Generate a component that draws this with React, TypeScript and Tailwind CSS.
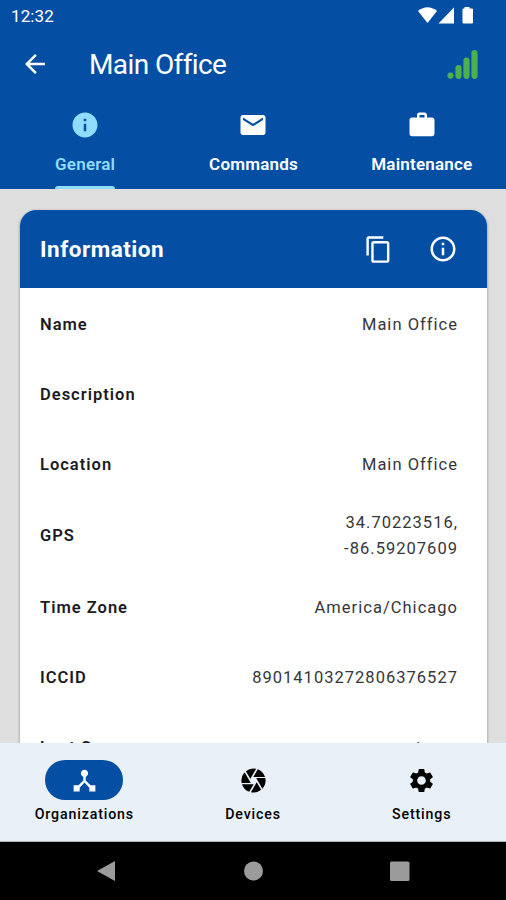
import type { IconType } from "react-icons";
import {
  MdArrowBack,
  MdCamera,
  MdContentCopy,
  MdDeviceHub,
  MdEmail,
  MdInfo,
  MdInfoOutline,
  MdSettings,
  MdWork,
} from "react-icons/md";

interface NavItem {
  label: string;
  icon: IconType;
  active?: boolean;
}

const tabs: NavItem[] = [
  { label: "General", icon: MdInfo, active: true },
  { label: "Commands", icon: MdEmail },
  { label: "Maintenance", icon: MdWork },
];

const bottomNav: NavItem[] = [
  { label: "Organizations", icon: MdDeviceHub, active: true },
  { label: "Devices", icon: MdCamera },
  { label: "Settings", icon: MdSettings },
];

const rows = [
  { label: "Name", lines: ["Main Office"], height: "h-[70px]" },
  { label: "Description", lines: [], height: "h-[70px]" },
  { label: "Location", lines: ["Main Office"], height: "h-[70px]" },
  { label: "GPS", lines: ["34.70223516,", "-86.59207609"], height: "h-[73px]" },
  { label: "Time Zone", lines: ["America/Chicago"], height: "h-[70px]" },
  { label: "ICCID", lines: ["89014103272806376527"], height: "h-[70px]" },
  { label: "Last Seen", lines: ["a moment ago"], height: "h-[71px]" },
];

function StatusBar() {
  return (
    <div className="flex h-8 items-center justify-between pr-8 pl-[11px]">
      <span className="text-[17px] leading-8 tracking-[0.1px]">12:32</span>
      <svg className="h-[18px] w-[56px]" viewBox="0 0 56 18" fill="currentColor">
        <path d="M0 4 Q9.500 -3.500 19 4 L9.500 16Z" />
        <path d="M36 .5V16.500H20.500Z" />
        <path d="M46.500 0H51.500V1.500H54Q55 1.500 55 2.500V15.500Q55 16.500 54 16.500H45.500Q44.500 16.500 44.500 15.500V2.500Q44.500 1.500 45.500 1.500H46.500Z" />
      </svg>
    </div>
  );
}

function SignalBars() {
  return (
    <svg className="h-8 w-8" viewBox="0 0 32 32" stroke="#4cb050" strokeWidth="6.2" strokeLinecap="round">
      <path d="M3.500 27.500V27.600M11.500 20V27.800M19.500 12.500V27.800M27.500 5V27.800" />
    </svg>
  );
}

function Tab({ label, icon: Icon, active }: NavItem) {
  return (
    <div className={`flex flex-1 flex-col items-center ${active ? "text-[#90dcff]" : "text-white"}`}>
      <Icon className="mt-[14px] size-[30px]" />
      <div className="relative mt-[11px] h-[38px]">
        <span className="text-[17px] leading-[26px] font-semibold tracking-[0.2px]">{label}</span>
        {active && <div className="absolute inset-x-0 bottom-0 h-[3px] rounded-t-[3px] bg-[#90dcff]" />}
      </div>
    </div>
  );
}

function InfoCard() {
  return (
    <div className="overflow-hidden rounded-t-[16px] bg-white shadow-[0_1px_3px_rgba(0,0,0,0.4)]">
      <div className="flex h-[78px] items-center bg-[#044fa4] pr-[29px] pl-5 text-white">
        <h2 className="flex-1 pt-0.5 text-[22.5px] font-bold tracking-[0.5px]">Information</h2>
        <MdContentCopy className="size-[29px]" />
        <MdInfoOutline className="ml-[35px] size-[30px]" />
      </div>
      <div className="pt-px">
        {rows.map((row) => (
          <div key={row.label} className={`flex items-center justify-between pr-[29px] pl-5 ${row.height}`}>
            <span className="pt-px text-[16.5px] leading-[26px] font-semibold tracking-[1px] text-[#1b1b1f]">{row.label}</span>
            <div className="pt-px text-right text-[16.5px] leading-[26px] tracking-[1.02px] text-[#36363a]">
              {row.lines.map((line) => (
                <div key={line}>{line}</div>
              ))}
            </div>
          </div>
        ))}
      </div>
    </div>
  );
}

export default function App() {
  return (
    <div className="flex h-[900px] w-[506px] flex-col overflow-hidden bg-[#dedede] font-['Roboto',sans-serif]">
      <header className="h-[189px] shrink-0 bg-[#044fa4] text-white">
        <StatusBar />
        <div className="flex h-16 items-center pr-[27px] pl-5">
          <MdArrowBack className="size-[30px]" />
          <h1 className="ml-[39px] flex-1 pt-px text-[28px] leading-9 tracking-[-0.6px]">Main Office</h1>
          <SignalBars />
        </div>
        <div className="flex h-[93px] pl-px">
          {tabs.map((tab) => (
            <Tab key={tab.label} {...tab} />
          ))}
        </div>
      </header>

      <main className="min-h-0 flex-1 overflow-hidden pt-[21px] pr-[19px] pl-5">
        <InfoCard />
      </main>

      <nav className="flex h-[99px] shrink-0 border-b border-[#aab0b8] bg-[#eaf0f8] text-black">
        {bottomNav.map(({ label, icon: Icon, active }) => (
          <div key={label} className="flex flex-1 flex-col items-center pt-[17px]">
            <div className={`flex h-10 w-[78px] items-center justify-center rounded-full ${active ? "bg-[#044fa4] text-white" : ""}`}>
              <Icon className="size-[29px]" />
            </div>
            <span className="mt-1 text-[14.2px] leading-5 font-medium tracking-[0.85px]">{label}</span>
          </div>
        ))}
      </nav>

      <div className="flex h-[58px] shrink-0 items-center justify-center bg-black">
        <svg className="h-[22px] w-[314px]" viewBox="0 0 314 22" fill="#9b9b9b">
          <path d="M1 11L19 1V21Z" />
          <circle cx="157.500" cy="11" r="9.500" />
          <rect x="294" y="1.500" width="19.500" height="19.500" rx="1.500" />
        </svg>
      </div>
    </div>
  );
}
